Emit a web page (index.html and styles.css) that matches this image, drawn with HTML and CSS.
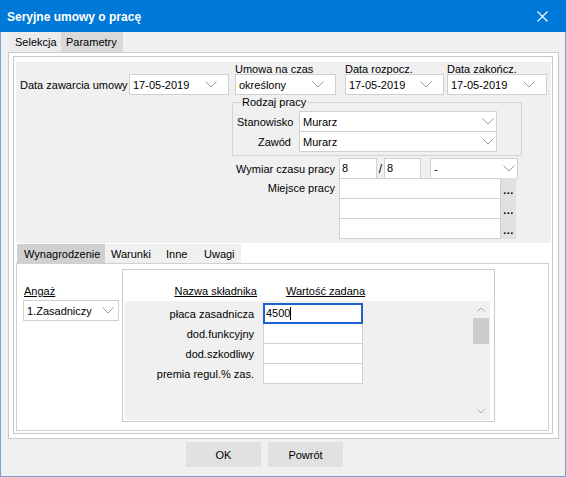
FILE: index.html
```html
<!DOCTYPE html>
<html lang="pl">
<head>
    <meta charset="UTF-8">
    <title>Seryjne umowy o pracę</title>
    <link rel="stylesheet" href="styles.css">
</head>
<body>
    <div class="window">
        <div class="titlebar">
            <span class="title">Seryjne umowy o pracę</span>
            <svg class="close" width="11" height="11" viewBox="0 0 11 11">
                <path d="M0.5 0.5 L10.5 10.5 M10.5 0.5 L0.5 10.5" stroke="#fff" stroke-width="1.1" fill="none"/>
            </svg>
        </div>

        <div class="top-tabs">
            <div class="tab tab-sel">Selekcja</div>
            <div class="tab tab-par active">Parametry</div>
        </div>

        <div class="outer">
            <div class="inner">
                <div class="form-panel">
                    <div class="row1">
                        <div class="field-inline">
                            <label>Data zawarcia umowy</label>
                            <div class="combo w-zaw">
                                <span>17-05-2019</span>
                                <svg class="chev" width="12" height="7" viewBox="0 0 12 7"><polyline points="0.5,0.5 6,6 11.5,0.5"/></svg>
                            </div>
                        </div>
                        <div class="field-stack f-umowa">
                            <label>Umowa na czas</label>
                            <div class="combo">
                                <span>określony</span>
                                <svg class="chev" width="12" height="7" viewBox="0 0 12 7"><polyline points="0.5,0.5 6,6 11.5,0.5"/></svg>
                            </div>
                        </div>
                        <div class="field-stack f-rozp">
                            <label>Data rozpocz.</label>
                            <div class="combo">
                                <span>17-05-2019</span>
                                <svg class="chev" width="12" height="7" viewBox="0 0 12 7"><polyline points="0.5,0.5 6,6 11.5,0.5"/></svg>
                            </div>
                        </div>
                        <div class="field-stack f-zak">
                            <label>Data zakończ.</label>
                            <div class="combo">
                                <span>17-05-2019</span>
                                <svg class="chev" width="12" height="7" viewBox="0 0 12 7"><polyline points="0.5,0.5 6,6 11.5,0.5"/></svg>
                            </div>
                        </div>
                    </div>

                    <fieldset class="rodzaj">
                        <legend>Rodzaj pracy</legend>
                        <div class="frow">
                            <label>Stanowisko</label>
                            <div class="combo tight w-rodzaj">
                                <span>Murarz</span>
                                <svg class="chev" width="12" height="7" viewBox="0 0 12 7"><polyline points="0.5,0.5 6,6 11.5,0.5"/></svg>
                            </div>
                        </div>
                        <div class="frow">
                            <label>Zawód</label>
                            <div class="combo tight w-rodzaj">
                                <span>Murarz</span>
                                <svg class="chev" width="12" height="7" viewBox="0 0 12 7"><polyline points="0.5,0.5 6,6 11.5,0.5"/></svg>
                            </div>
                        </div>
                    </fieldset>

                    <div class="czas">
                        <div class="crow">
                            <label>Wymiar czasu pracy</label>
                            <div class="box w-h1">8</div>
                            <span class="slash">/</span>
                            <div class="box w-h2">8</div>
                            <div class="combo tight w-wym">
                                <span>-</span>
                                <svg class="chev" width="12" height="7" viewBox="0 0 12 7"><polyline points="0.5,0.5 6,6 11.5,0.5"/></svg>
                            </div>
                        </div>
                        <div class="crow miejsce">
                            <label>Miejsce pracy</label>
                            <div class="lines">
                                <div class="line"><div class="box w-miejsce"></div><div class="dots">...</div></div>
                                <div class="line"><div class="box w-miejsce"></div><div class="dots">...</div></div>
                                <div class="line"><div class="box w-miejsce"></div><div class="dots">...</div></div>
                            </div>
                        </div>
                    </div>
                </div>

                <div class="sub-tabs">
                    <div class="stab active">Wynagrodzenie</div>
                    <div class="stab">Warunki</div>
                    <div class="stab">Inne</div>
                    <div class="stab">Uwagi</div>
                </div>

                <div class="sub-panel">
                    <div class="angaz">
                        <label>Angaż</label>
                        <div class="combo mid w-angaz">
                            <span>1.Zasadniczy</span>
                            <svg class="chev" width="12" height="7" viewBox="0 0 12 7"><polyline points="0.5,0.5 6,6 11.5,0.5"/></svg>
                        </div>
                    </div>

                    <div class="grid">
                        <div class="ghead">
                            <span class="h-name">Nazwa składnika</span>
                            <span class="h-val">Wartość zadana</span>
                        </div>
                        <div class="gbody">
                            <div class="grows">
                                <div class="grow">
                                    <span class="gl">płaca zasadnicza</span>
                                    <div class="cell focus">4500<span class="caret"></span></div>
                                </div>
                                <div class="grow">
                                    <span class="gl">dod.funkcyjny</span>
                                    <div class="cell"></div>
                                </div>
                                <div class="grow">
                                    <span class="gl">dod.szkodliwy</span>
                                    <div class="cell"></div>
                                </div>
                                <div class="grow">
                                    <span class="gl">premia regul.% zas.</span>
                                    <div class="cell"></div>
                                </div>
                            </div>
                            <div class="gscroll">
                                <div class="arrow">
                                    <svg width="8" height="5" viewBox="0 0 8 5"><polyline points="0.5,4.5 4,1 7.5,4.5"/></svg>
                                </div>
                                <div class="thumb"></div>
                                <div class="arrow down">
                                    <svg width="8" height="5" viewBox="0 0 8 5"><polyline points="0.5,0.5 4,4 7.5,0.5"/></svg>
                                </div>
                            </div>
                        </div>
                    </div>
                </div>
            </div>
        </div>

        <div class="buttons">
            <button>OK</button>
            <button>Powrót</button>
        </div>
    </div>
</body>
</html>
```

FILE: styles.css
```css
body {
    margin: 0;
    font-family: 'Liberation Sans', Arial, sans-serif;
    font-size: 11px;
    color: #000;
    background: #fff;
}
.window {
    width: 566px;
    height: 477px;
    box-sizing: border-box;
    border: 1px solid #7a9fd6;
    border-top: none;
    background: #f0f0f0;
}
.titlebar {
    height: 32px;
    margin: 0 -1px;
    padding: 1px 18px 0 7px;
    box-sizing: border-box;
    background: #0078d7;
    color: #fff;
    display: flex;
    align-items: center;
    justify-content: space-between;
}
.title {
    font-size: 12px;
    font-weight: bold;
}
.close {
    display: block;
}

/* top tab strip */
.top-tabs {
    display: flex;
    height: 20px;
    padding-left: 9px;
}
.tab {
    display: flex;
    align-items: center;
    padding-left: 5px;
    box-sizing: border-box;
    background: #ebebeb;
}
.tab-sel {
    width: 51px;
}
.tab-par {
    width: 62px;
}
.tab.active {
    background: #d9d9d9;
}

.outer {
    height: 387px;
    box-sizing: border-box;
    margin: 0 6px 0 7px;
    padding: 3px 5px 4px 4px;
    border: 1px solid #cacaca;
    background: #fff;
}
.inner {
    height: 378px;
    box-sizing: border-box;
    padding: 5px 1px 2px 2px;
    border: 1px solid #cacaca;
    background: #fff;
}

/* Parametry form */
.form-panel {
    height: 181px;
    box-sizing: border-box;
    padding-left: 4px;
    background: #f0f0f0;
}
.row1 {
    display: flex;
    align-items: flex-end;
}
.field-inline {
    display: flex;
    align-items: center;
}
.field-inline label {
    width: 109px;
}
.field-stack label {
    display: block;
    height: 12px;
    line-height: 14px;
}
.f-umowa {
    margin-left: 6px;
    width: 101px;
}
.f-rozp {
    margin-left: 9px;
    width: 99px;
}
.f-zak {
    margin-left: 3px;
    width: 100px;
}
.w-zaw {
    width: 100px;
}

.combo {
    height: 21px;
    box-sizing: border-box;
    border: 1px solid #d0d0d0;
    background: #fff;
    display: flex;
    align-items: center;
    justify-content: space-between;
    padding: 0 11px 0 3px;
}
.combo.tight {
    padding-right: 2px;
}
.combo.mid {
    padding-right: 4px;
}
.chev {
    display: block;
    flex-shrink: 0;
}
.chev polyline {
    fill: none;
    stroke: #9a9a9a;
    stroke-width: 1;
}

.rodzaj {
    margin: 1px 0 0 212px;
    width: 290px;
    box-sizing: border-box;
    padding: 2px 0 3px 4px;
    border: 1px solid #d3d3d3;
    min-width: 0;
}
.rodzaj legend {
    margin-left: 4px;
    padding: 0 1px;
    line-height: 13px;
}
.frow {
    display: flex;
    align-items: center;
}
.frow + .frow {
    margin-top: -1px;
}
.frow label {
    width: 54px;
    margin-right: 8px;
    text-align: right;
}
.w-rodzaj {
    width: 198px;
}

.czas {
    margin: 2px 0 0 212px;
}
.crow {
    display: flex;
    align-items: center;
}
.crow label {
    width: 103px;
    margin-right: 4px;
    text-align: right;
}
.box {
    height: 21px;
    box-sizing: border-box;
    border: 1px solid #d0d0d0;
    background: #fff;
    padding: 3px 2px 0;
}
.w-h1 {
    width: 38px;
}
.w-h2 {
    width: 37px;
}
.slash {
    width: 7px;
    text-align: center;
    font-size: 12px;
}
.w-wym {
    width: 88px;
    margin-left: 9px;
}
.crow.miejsce {
    align-items: flex-start;
    margin-top: -1px;
}
.crow.miejsce label {
    line-height: 21px;
}
.line {
    display: flex;
}
.line + .line {
    margin-top: -1px;
}
.w-miejsce {
    width: 162px;
}
.dots {
    width: 15px;
    height: 21px;
    box-sizing: border-box;
    background: #e1e1e1;
    display: flex;
    align-items: flex-end;
    justify-content: center;
    line-height: 14px;
    font-weight: bold;
    letter-spacing: 0.5px;
    padding-bottom: 2px;
}

/* lower tabs */
.sub-tabs {
    display: flex;
    height: 19px;
    margin-top: 1px;
    padding-left: 1px;
}
.stab {
    display: flex;
    align-items: center;
    padding-left: 7px;
    box-sizing: border-box;
    background: #f0f0f0;
}
.stab:nth-child(1) {
    width: 88px;
}
.stab:nth-child(2) {
    width: 54px;
    padding-left: 6px;
}
.stab:nth-child(3) {
    width: 35px;
}
.stab:nth-child(4) {
    width: 47px;
    padding-left: 10px;
}
.stab.active {
    background: #d0d0d0;
}

.sub-panel {
    height: 168px;
    box-sizing: border-box;
    margin-right: 2px;
    padding: 5px 0 0 6px;
    border: 1px solid #d0d0d0;
    background: #fff;
    display: flex;
    align-items: flex-start;
}
.angaz {
    width: 96px;
    margin-top: 15px;
}
.angaz label {
    display: block;
    line-height: 14px;
    margin: 0 0 2px 1px;
    text-decoration: underline;
}
.w-angaz {
    width: 96px;
}

.grid {
    margin-left: 3px;
    width: 373px;
    height: 153px;
    box-sizing: border-box;
    padding: 0 4px 1px 2px;
    border: 1px solid #cacaca;
}
.ghead {
    height: 31px;
    box-sizing: border-box;
    padding-bottom: 3px;
    display: flex;
    align-items: flex-end;
    line-height: 14px;
}
.ghead span {
    text-decoration: underline;
}
.h-name {
    width: 132px;
    text-align: right;
}
.h-val {
    margin-left: 29px;
}
.gbody {
    height: 119px;
    background: #f0f0f0;
    display: flex;
}
.grows {
    padding-top: 2px;
}
.grow {
    display: flex;
    align-items: center;
}
.grow + .grow {
    margin-top: -1px;
}
.gl {
    width: 129px;
    text-align: right;
}
.cell {
    width: 100px;
    height: 21px;
    margin-left: 9px;
    box-sizing: border-box;
    border: 1px solid #d0d0d0;
    background: #fff;
    padding: 3px 2px 0;
}
.cell.focus {
    border: 2px solid #1e60d3;
    padding: 2px 1px 0;
    position: relative;
    z-index: 1;
}
.caret {
    display: inline-block;
    width: 1px;
    height: 13px;
    background: #000;
    vertical-align: -3px;
}
.gscroll {
    width: 16px;
    margin-left: auto;
    margin-right: 1px;
    display: flex;
    flex-direction: column;
}
.arrow {
    height: 17px;
    display: flex;
    align-items: center;
    justify-content: center;
}
.arrow.down {
    margin-top: auto;
}
.arrow polyline {
    fill: none;
    stroke: #a6a6a6;
    stroke-width: 1;
}
.thumb {
    height: 26px;
    background: #cdcdcd;
}

.buttons {
    display: flex;
    gap: 7px;
    margin-top: 3px;
    padding-left: 185px;
}
.buttons button {
    width: 75px;
    height: 25px;
    border: none;
    background: #e1e1e1;
    font-family: inherit;
    font-size: 11px;
    color: #000;
    padding: 0;
}
```
